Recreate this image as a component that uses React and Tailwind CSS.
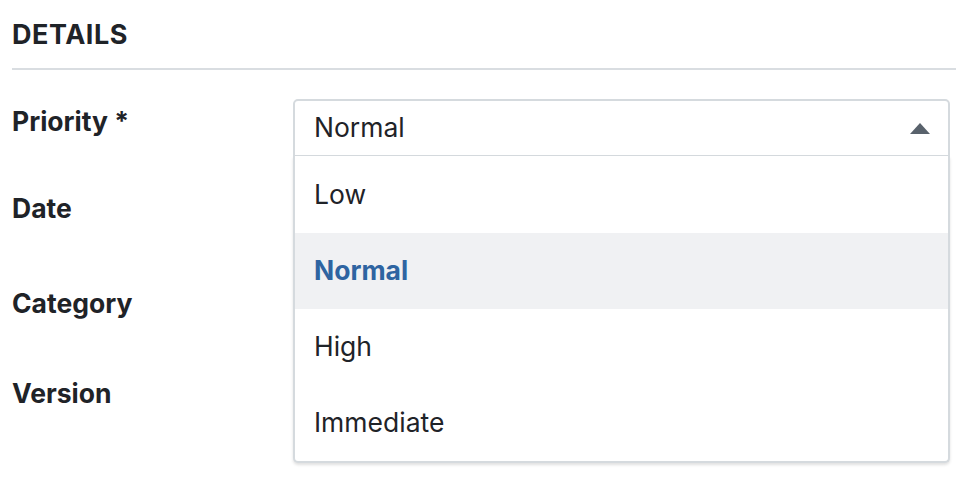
import { useState } from "react";

const options = ["Low", "Normal", "High", "Immediate"];

const labels = [
  { text: "Priority *", cls: "h-[44px]" },
  { text: "Date", cls: "h-[87px] pt-[43px]" },
  { text: "Category", cls: "h-[95px] pt-[51px]" },
  { text: "Version", cls: "h-[90px] pt-[46px]" },
];

const App = () => {
  const [selected, setSelected] = useState("Normal");

  return (
    <div className="w-[968px] h-[484px] bg-white px-3 text-[#1f2328] font-['Inter',sans-serif]">
      {/* Section header */}
      <div className="h-[70px] border-b-2 border-[#d9dde1] pt-[17px]">
        <h2 className="text-[27px] leading-[35px] font-bold tracking-[0.02em]">DETAILS</h2>
      </div>

      <div className="flex pt-[29px]">
        {/* Labels */}
        <div className="w-[281px] shrink-0 text-[26.5px] font-bold">
          {labels.map((l) => (
            <div key={l.text} className={`leading-[44px] ${l.cls}`}>
              {l.text}
            </div>
          ))}
        </div>

        {/* Priority select, open */}
        <div className="relative flex-1 mr-[6px]">
          <div className="h-[58px] border-2 border-[#d5dade] rounded-t-[5px] flex items-center justify-between pl-[19px] pr-[18px] text-[26.5px]">
            <span>{selected}</span>
            <svg width="20" height="11" viewBox="0 0 20 11">
              <path d="M10 0 L20 11 L0 11 Z" fill="#59626c" />
            </svg>
          </div>
          <ul className="absolute left-0 right-0 top-[57px] bg-white border-2 border-t-0 border-[#d5dade] rounded-b-[5px] shadow-[0_2px_3px_rgba(0,0,0,0.12)]">
            {options.map((o, i) => (
              <li
                key={o}
                onClick={() => setSelected(o)}
                className={`flex items-center pl-[19px] text-[26.5px] ${i === 0 ? "h-[77px]" : "h-[76px]"} ${
                  o === selected ? "bg-[#f0f1f3] text-[#2e64a1] font-bold" : ""
                }`}
              >
                {o}
              </li>
            ))}
          </ul>
        </div>
      </div>
    </div>
  );
};

export default App;
